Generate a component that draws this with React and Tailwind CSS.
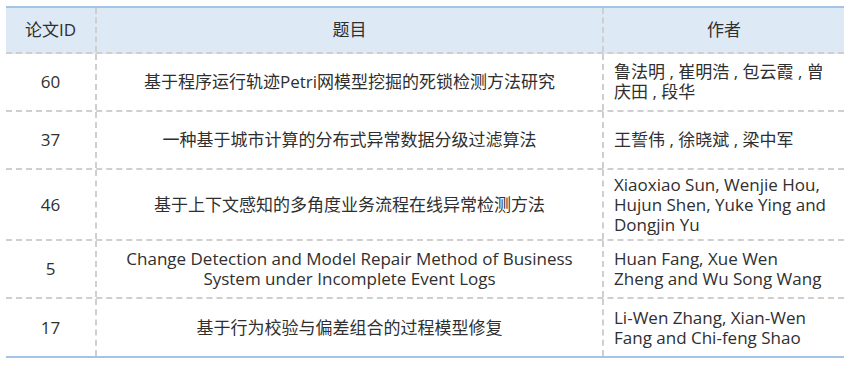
import React from 'react';

const rows = [
    {
        id: '60',
        title: ['基于程序运行轨迹Petri网模型挖掘的死锁检测方法研究'],
        authors: ['鲁法明 , 崔明浩 , 包云霞 , 曾', '庆田 , 段华'],
        h: 'h-[58px]',
    },
    {
        id: '37',
        title: ['一种基于城市计算的分布式异常数据分级过滤算法'],
        authors: ['王誓伟 , 徐晓斌 , 梁中军'],
        h: 'h-[58px]',
    },
    {
        id: '46',
        title: ['基于上下文感知的多角度业务流程在线异常检测方法'],
        authors: ['Xiaoxiao Sun, Wenjie Hou,', 'Hujun Shen, Yuke Ying and', 'Dongjin Yu'],
        h: 'h-[71px]',
    },
    {
        id: '5',
        title: ['Change Detection and Model Repair Method of Business', 'System under Incomplete Event Logs'],
        authors: ['Huan Fang, Xue Wen', 'Zheng and Wu Song Wang'],
        h: 'h-[58px]',
    },
    {
        id: '17',
        title: ['基于行为校验与偏差组合的过程模型修复'],
        authors: ['Li-Wen Zhang, Xian-Wen', 'Fang and Chi-feng Shao'],
        h: 'h-[57px]',
    },
];

function Lines({ lines }) {
    return lines.map((line, i) => (
        <div key={i} className="whitespace-nowrap">
            {line}
        </div>
    ));
}

function Row({ row, last }) {
    return (
        <div className={`flex ${row.h} ${last ? '' : 'border-b-2 border-dashed border-[#cfcfcf]'}`}>
            <div className="w-[91px] shrink-0 flex items-center justify-center border-r-2 border-dashed border-[#cfcfcf]">
                {row.id}
            </div>
            <div className="w-[507px] shrink-0 flex flex-col items-center justify-center text-center border-r-2 border-dashed border-[#cfcfcf]">
                <Lines lines={row.title} />
            </div>
            <div className="flex-1 flex flex-col justify-center pl-[10px]">
                <Lines lines={row.authors} />
            </div>
        </div>
    );
}

export default function App() {
    return (
        <div className="w-[851px] h-[367px] bg-white pt-[6px] pl-[6px]">
            <div
                className="w-[838px] text-[17px] leading-[20px] text-[#2f2f2f]"
                style={{ fontFamily: '"Open Sans", "Noto Sans CJK SC", sans-serif' }}
            >
                <div className="h-[2px] bg-[#a3c4e6]" />

                {/* Header */}
                <div className="flex h-[46px] bg-[#dde9f5] border-b-2 border-dashed border-[#cfcfcf]">
                    <div className="w-[91px] shrink-0 flex items-center justify-center border-r-2 border-dashed border-[#cfcfcf]">
                        论文ID
                    </div>
                    <div className="w-[507px] shrink-0 flex items-center justify-center border-r-2 border-dashed border-[#cfcfcf]">
                        题目
                    </div>
                    <div className="flex-1 flex items-center justify-center">作者</div>
                </div>

                {rows.map((row, i) => (
                    <Row key={row.id} row={row} last={i === rows.length - 1} />
                ))}

                <div className="h-[2px] bg-[#a3c4e6]" />
            </div>
        </div>
    );
}
